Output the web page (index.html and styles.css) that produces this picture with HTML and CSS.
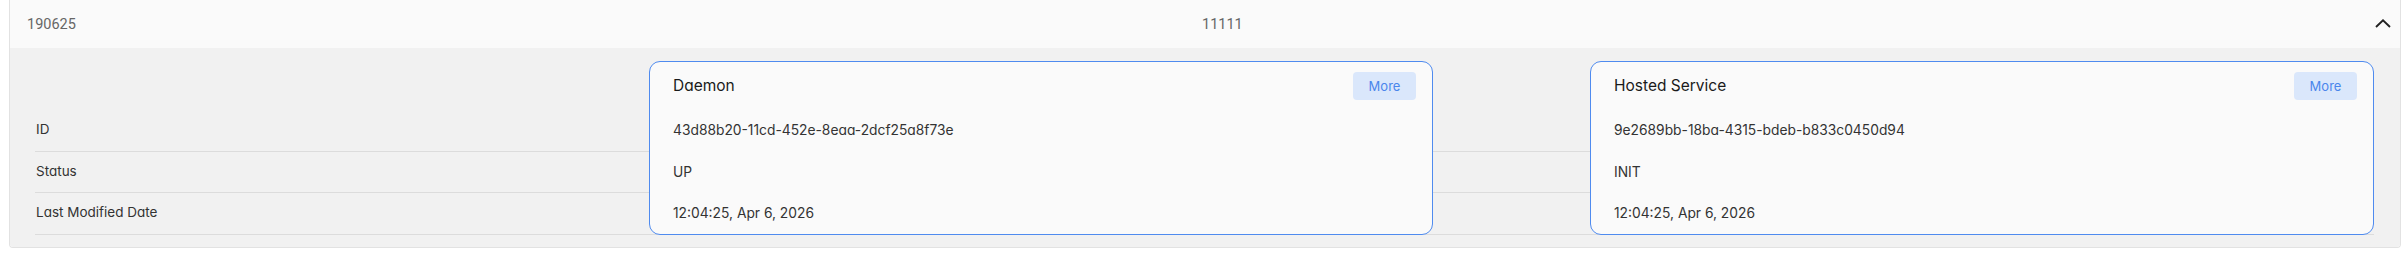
FILE: index.html
```html
<!DOCTYPE html>
<html>
<head>
<meta charset="utf-8">
<link rel="stylesheet" href="styles.css">
</head>
<body>
<div class="panel">
  <div class="panel-head">
    <span class="head-cell">190625</span>
    <span class="head-cell">11111</span>
    <span class="chev">
      <svg width="16" height="9" viewBox="0 0 16 9"><path d="M1 8 L8 1.3 L15 8" fill="none" stroke="#222" stroke-width="1.9"/></svg>
    </span>
  </div>
  <div class="panel-body">
    <div class="row r0"></div>
    <div class="row r1"><span class="label">ID</span></div>
    <div class="row r2"><span class="label">Status</span></div>
    <div class="row r3"><span class="label">Last Modified Date</span></div>

    <div class="card c1">
      <div class="card-title"><span>Daemon</span><button class="more">More</button></div>
      <div class="card-val">43d88b20-11cd-452e-8eaa-2dcf25a8f73e</div>
      <div class="card-val">UP</div>
      <div class="card-val">12:04:25, Apr 6, 2026</div>
    </div>
    <div class="card c2">
      <div class="card-title"><span>Hosted Service</span><button class="more">More</button></div>
      <div class="card-val">9e2689bb-18ba-4315-bdeb-b833c0450d94</div>
      <div class="card-val">INIT</div>
      <div class="card-val">12:04:25, Apr 6, 2026</div>
    </div>
  </div>
</div>
</body>
</html>
```
FILE: styles.css
```css
html, body {
  margin: 0;
  padding: 0;
  background: #ffffff;
}
body {
  font-family: Inter, "Noto Sans", sans-serif;
  font-feature-settings: "cv11" 1;
}
.panel {
  margin: 0 5px 0 9px;
  border: 1px solid #e2e2e2;
  border-top: none;
  border-radius: 0 0 4px 4px;
  overflow: hidden;
  width: 2390px;
}
.panel-head {
  height: 48px;
  background: #fafafa;
  display: grid;
  grid-template-columns: 1175px 1fr 24px;
  align-items: center;
  padding: 0 5px 0 17px;
  font-family: Roboto, "Liberation Sans", sans-serif;
  font-size: 14.5px;
  color: #666;
}
.chev {
  display: flex;
  justify-content: center;
  align-items: center;
  padding-bottom: 2px;
}
.chev svg { display: block; }
.panel-body {
  background: #f1f1f1;
  padding: 13px 26px 12px 25px;
  display: grid;
  grid-template-columns: 614px 784px 157px 784px;
  grid-template-rows: 49px 42px 41px 42px;
}
.row {
  grid-column: 1 / -1;
  display: flex;
  align-items: center;
  padding-bottom: 3px;
  border-bottom: 1px solid #dcdcdc;
  font-size: 13.5px;
  color: #333;
}
.row.r0 { grid-row: 1; border-bottom: none; }
.row.r1 { grid-row: 2; }
.row.r2 { grid-row: 3; }
.row.r3 { grid-row: 4; }
.label { padding-left: 1px; }
.card {
  grid-row: 1 / 5;
  z-index: 1;
  background: #fafafa;
  border: 1px solid #4f8bef;
  border-radius: 11px;
  display: grid;
  grid-template-rows: 48px 42px 41px 41px;
  padding: 0 16px 0 23px;
}
.card.c1 { grid-column: 2; }
.card.c2 { grid-column: 4; }
.card-title {
  display: flex;
  justify-content: space-between;
  align-items: center;
  font-size: 15.5px;
  font-weight: 400;
  color: #1a1a1a;
}
.card-title span { padding-bottom: 2px; }
.card-val {
  display: flex;
  align-items: center;
  padding-bottom: 2px;
  font-size: 13.8px;
  color: #333;
}
.more {
  width: 63px;
  height: 28px;
  border: none;
  border-radius: 4px;
  background: #dae7fb;
  color: #4a86ec;
  font-family: Inter, "Noto Sans", sans-serif;
  font-size: 13px;
  padding: 0;
  cursor: pointer;
}
```
